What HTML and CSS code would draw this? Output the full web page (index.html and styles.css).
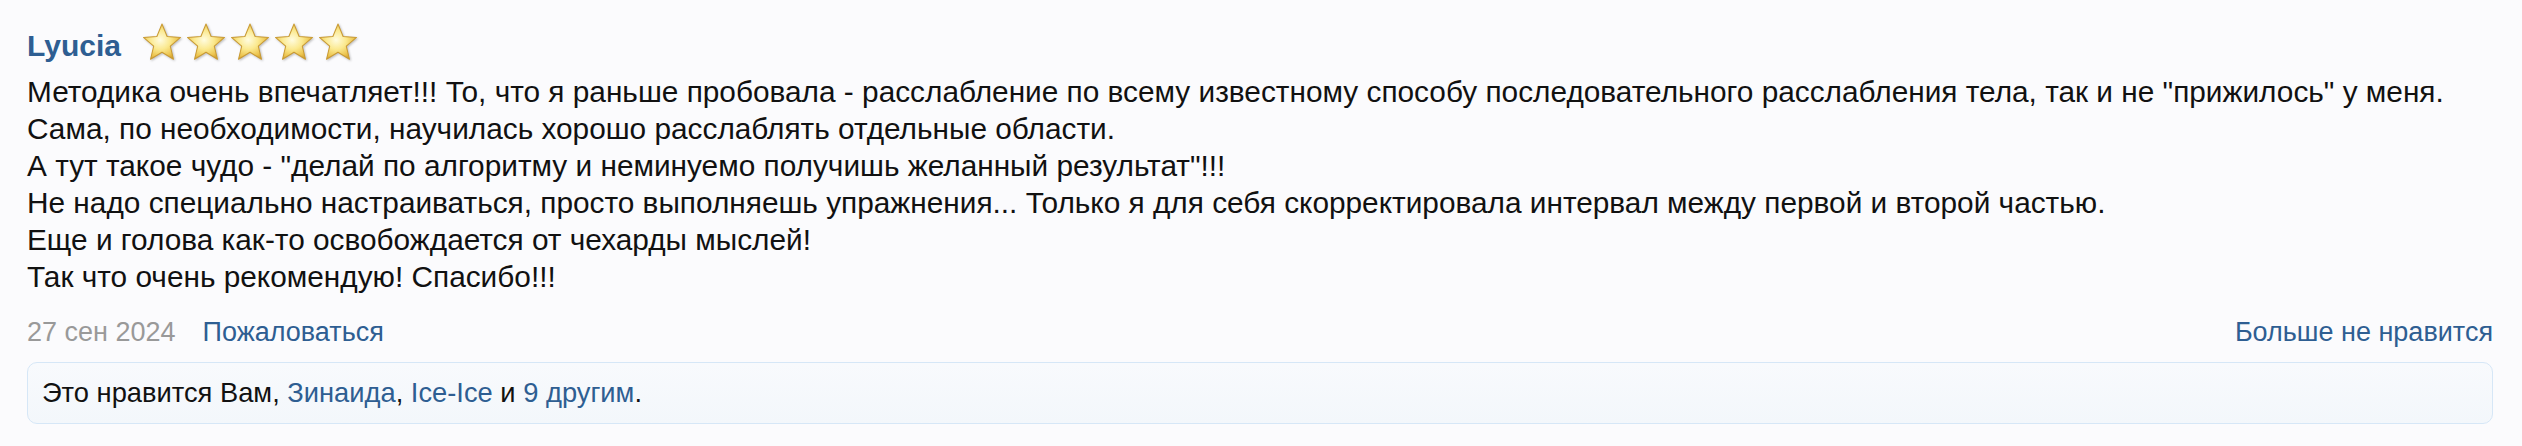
FILE: index.html
```html
<!DOCTYPE html>
<html lang="ru">
<head>
  <meta charset="UTF-8">
  <title>Отзыв</title>
  <link rel="stylesheet" href="styles.css">
</head>
<body>
  <svg width="0" height="0" class="defs">
    <defs>
      <radialGradient id="starFill" cx="45%" cy="45%" r="60%">
        <stop offset="0" stop-color="#fffce0"/>
        <stop offset="0.45" stop-color="#fbe98f"/>
        <stop offset="0.8" stop-color="#ecc44f"/>
        <stop offset="1" stop-color="#d29e2a"/>
      </radialGradient>
      <symbol id="star" viewBox="0 0 40 40">
        <path d="M20 2 L25 14.1 L38.1 15.1 L28.1 23.6 L31.2 36.4 L20 29.5 L8.8 36.4 L11.9 23.6 L1.9 15.1 L15 14.1 Z"
              fill="url(#starFill)" stroke="#c99a33" stroke-width="1" stroke-linejoin="round"/>
      </symbol>
    </defs>
  </svg>

  <div class="review">
    <div class="review-head">
      <a href="#" class="author">Lyucia</a>
      <span class="stars">
        <svg class="star"><use href="#star"/></svg>
        <svg class="star"><use href="#star"/></svg>
        <svg class="star"><use href="#star"/></svg>
        <svg class="star"><use href="#star"/></svg>
        <svg class="star"><use href="#star"/></svg>
      </span>
    </div>

    <div class="review-text">
      Методика очень впечатляет!!! То, что я раньше пробовала - расслабление по всему известному способу последовательного расслабления тела, так и не "прижилось" у меня.<br>
      Сама, по необходимости, научилась хорошо расслаблять отдельные области.<br>
      А тут такое чудо - "делай по алгоритму и неминуемо получишь желанный результат"!!!<br>
      Не надо специально настраиваться, просто выполняешь упражнения... Только я для себя скорректировала интервал между первой и второй частью.<br>
      Еще и голова как-то освобождается от чехарды мыслей!<br>
      Так что очень рекомендую! Спасибо!!!
    </div>

    <div class="review-meta">
      <span class="date">27 сен 2024</span>
      <a href="#" class="link">Пожаловаться</a>
      <a href="#" class="link unlike">Больше не нравится</a>
    </div>

    <div class="likes">
      Это нравится Вам, <a href="#" class="link">Зинаида</a>, <a href="#" class="link">Ice-Ice</a> и <a href="#" class="link">9 другим</a>.
    </div>
  </div>
</body>
</html>
```

FILE: styles.css
```css
body {
  margin: 0;
  font-family: "Liberation Sans", Arial, sans-serif;
  background-color: #fbfbfd;
  color: #111;
}
.defs {
  position: absolute;
}
.review {
  padding: 22px 29px 0 27px;
  font-size: 27px;
}
.review-head {
  display: flex;
  align-items: flex-start;
  height: 41px;
}
.author {
  font-size: 30px;
  font-weight: bold;
  line-height: 41px;
  padding-top: 3px;
  color: #2e5e92;
  text-decoration: none;
}
.stars {
  display: flex;
  margin-left: 19px;
  filter: drop-shadow(1px 1px 1px rgba(0,0,0,0.25));
}
.star {
  width: 44px;
  height: 41px;
}
.review-text {
  margin-top: 10px;
  font-size: 29.8px;
  line-height: 37px;
}
.review-meta {
  display: flex;
  margin-top: 19px;
  line-height: 37px;
}
.date {
  color: #999;
  margin-right: 27px;
}
.link {
  color: #2e5e92;
  text-decoration: none;
}
.unlike {
  margin-left: auto;
}
.likes {
  margin-top: 11px;
  padding: 11px 14px 12px;
  font-size: 27.3px;
  line-height: 37px;
  border: 1px solid #d6e7f7;
  border-radius: 10px;
  background: linear-gradient(#f8fafd, #f3f7fb);
}
```
